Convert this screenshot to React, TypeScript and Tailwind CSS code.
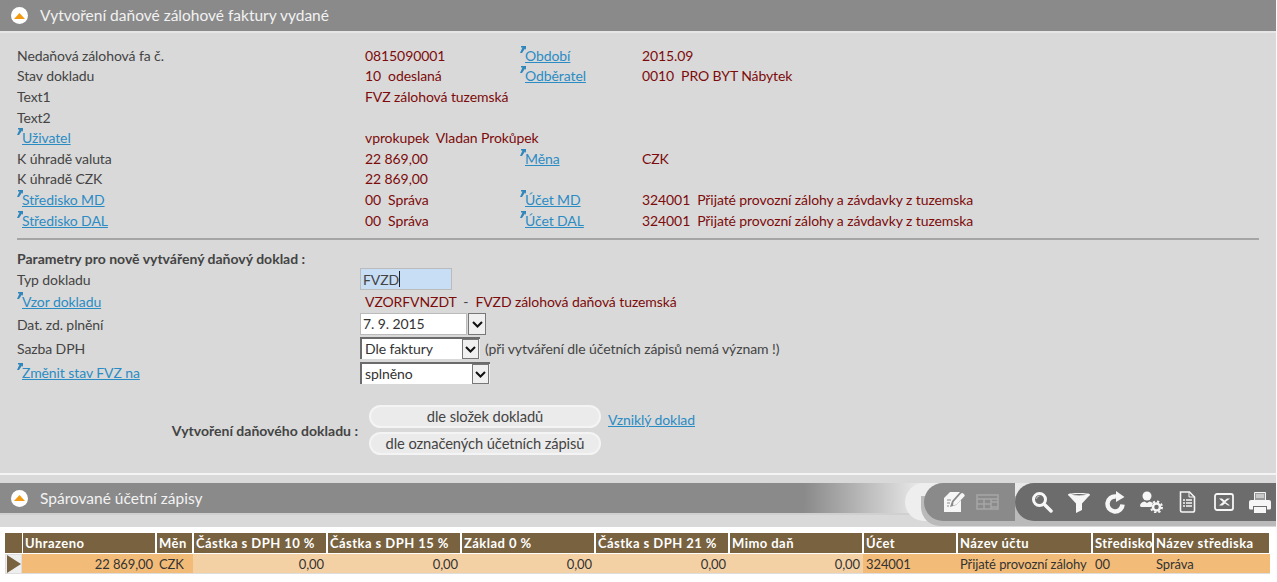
const font = "font-['Lato','Noto_Sans',sans-serif]";

function Toggle() {
  return (
    <span className="flex size-[17px] shrink-0 items-center justify-center rounded-full bg-white">
      <svg width="11" height="6" viewBox="0 0 11 6"><path d="M5.500 0 11 6H0z" fill="#f39a12" /></svg>
    </span>
  );
}

function SectionHeader({ title, bg, h }: { title: string; bg: string; h: string }) {
  return (
    <div className={`flex items-center gap-[12px] pl-[11px] text-[15.5px] tracking-normal text-[#f2f2f2] ${bg} ${h}`}>
      <Toggle />
      <span>{title}</span>
    </div>
  );
}

function Ref({ label }: { label: string }) {
  return (
    <span className="relative inline-block pl-[5px] leading-none">
      <svg className="absolute -top-[3px] left-0" width="6" height="7" viewBox="0 0 6 7">
        <path d="M1 0h5v4L5 2.500 2 7H0l2.500-5.500L1 1.500z" fill="#2f86bb" />
      </svg>
      <span className="text-[#2b8cc4] underline">{label}</span>
    </span>
  );
}

const rows: { a: React.ReactNode; b?: string; c?: string; d?: string }[] = [
  { a: "Nedaňová zálohová fa č.", b: "0815090001", c: "Období", d: "2015.09" },
  { a: "Stav dokladu", b: "10\u00a0\u00a0odeslaná", c: "Odběratel", d: "0010\u00a0\u00a0PRO BYT Nábytek" },
  { a: "Text1", b: "FVZ zálohová tuzemská" },
  { a: "Text2" },
  { a: <Ref label="Uživatel" />, b: "vprokupek\u00a0\u00a0Vladan Prokůpek" },
  { a: "K úhradě valuta", b: "22 869,00", c: "Měna", d: "CZK" },
  { a: "K úhradě CZK", b: "22 869,00" },
  { a: <Ref label="Středisko MD" />, b: "00\u00a0\u00a0Správa", c: "Účet MD", d: "324001\u00a0\u00a0Přijaté provozní zálohy a závdavky z tuzemska" },
  { a: <Ref label="Středisko DAL" />, b: "00\u00a0\u00a0Správa", c: "Účet DAL", d: "324001\u00a0\u00a0Přijaté provozní zálohy a závdavky z tuzemska" },
];

function Chevron() {
  return (
    <svg width="11" height="7" viewBox="0 0 11 7" fill="none">
      <path d="M1 1l4.500 4.500L10 1" stroke="#111" strokeWidth="2" />
    </svg>
  );
}

function SelectBox({ text, width, className }: { text: string; width: string; className?: string }) {
  return (
    <div className={`flex h-[22px] items-stretch border-l-2 border-t-2 border-[#6b6b6b] bg-white pl-[3px] ${width} ${className ?? ""}`}>
      <span className="flex-1 leading-[20px] text-[#333]">{text}</span>
      <span className="flex w-[17px] items-center justify-center border border-[#777] bg-[#f0f0f0]">
        <Chevron />
      </span>
      <span className="w-px bg-[#eee]" />
    </div>
  );
}

const columns = [
  { t: "Uhrazeno", w: "w-[134px]", v: "22 869,00", r: true, bg: "bg-[#f2bc78]" },
  { t: "Měn", w: "w-[37px]", v: "CZK", bg: "bg-[#f2bc78]" },
  { t: "Částka s DPH 10 %", w: "w-[134px]", v: "0,00", r: true, bg: "bg-[#f3d1a5]" },
  { t: "Částka s DPH 15 %", w: "w-[134px]", v: "0,00", r: true, bg: "bg-[#f3d1a5]" },
  { t: "Základ 0 %", w: "w-[134px]", v: "0,00", r: true, bg: "bg-[#f3d1a5]" },
  { t: "Částka s DPH 21 %", w: "w-[134px]", v: "0,00", r: true, bg: "bg-[#f3d1a5]" },
  { t: "Mimo daň", w: "w-[134px]", v: "0,00", r: true, bg: "bg-[#f3d1a5]" },
  { t: "Účet", w: "w-[94px]", v: "324001", bg: "bg-[#f2bc78]" },
  { t: "Název účtu", w: "w-[135px]", v: "Přijaté provozní zálohy", bg: "bg-[#f2bc78]" },
  { t: "Středisko", w: "w-[61px]", v: "00", bg: "bg-[#f2bc78]" },
  { t: "Název střediska", w: "w-[117px]", v: "Správa", bg: "bg-[#f2bc78]" },
];

function Toolbar() {
  const white = "#f6f6f6";
  const mid = "#8a8a8a";
  const dark = "#6c6c6c";
  return (
    <div className="absolute right-0 top-0 flex h-[38px] w-[352px]">
      {/* pale arc and shadow behind the pills */}
      <div className="absolute -left-[19px] top-0 h-[38px] w-[50px] rounded-l-[19px] bg-[#eeeeee]" />
      <div className="absolute -bottom-[5px] -left-[3px] right-0 h-[30px] rounded-bl-[19px] bg-[#bababa]" />

      <div className="relative flex w-[91px] shrink-0 items-center rounded-l-[19px] bg-[#8a8a8a] pl-[20px]">
        <svg className="shrink-0" width="21" height="20" viewBox="0 0 21 20">
          <path d="M6 0h10l-8 9-2 6 6-2 5-5v12H0V6z" fill={white} />
          <path d="M3 8h4M3 11h3M3 14h2" stroke={mid} strokeWidth="1" />
          <path d="M9.500 10 17 1.500a1.600 1.600 0 0 1 2.300 0l.9.9a1.600 1.600 0 0 1 0 2.200L12.500 12.500 9 13.500z" fill={white} />
        </svg>
        <svg className="ml-[11px] shrink-0" width="23" height="16" viewBox="0 0 23 16" fill="none" stroke="#a6a6a6" strokeWidth="1.500">
          <path d="M1 1h21v14H1zM1 5h21M1 10h14M8 5v10M15 5v10M15 8h7v5h-7" />
        </svg>
      </div>

      <div className="relative flex flex-1 items-center rounded-l-[19px] bg-[#6c6c6c] pl-[17px]">
        <svg width="21" height="22" viewBox="0 0 21 22" fill="none">
          <circle cx="7.500" cy="8.500" r="6" stroke={white} strokeWidth="3" />
          <path d="M4.500 8a3 3 0 0 1 3-3" stroke={white} strokeWidth="1" opacity="0.6" />
          <path d="M12.500 13.500 19 20" stroke={white} strokeWidth="3.500" strokeLinecap="round" />
        </svg>
        <svg className="ml-[15px]" width="22" height="21" viewBox="0 0 22 21">
          <path d="M0 2.500C0 .5 22 .5 22 2.500c0 1-1 1.500-2 2.500l-6 6.500V18l-6 3v-9.500L2 5C1 4 0 3.500 0 2.500z" fill={white} />
          <path d="M3.500 2.800c4-1 11-1 15 0-4 .8-11 .8-15 0z" fill={dark} />
        </svg>
        <svg className="ml-[15px]" width="21" height="23" viewBox="0 0 21 23" fill="none">
          <path d="M17.500 13.500a7.500 7.500 0 1 1-6.500-8" stroke={white} strokeWidth="4.500" />
          <path d="M11 0l8.500 6L11 11z" fill={white} />
        </svg>
        <svg className="ml-[14px]" width="23" height="22" viewBox="0 0 23 22">
          <circle cx="7" cy="5" r="4.500" fill={white} />
          <path d="M0 15c0-2.500 2-4 4.500-4.500L7 12l2.500-1.500c1.500.3 2.500 1 3.500 2L10.500 16H1z" fill={white} />
          <circle cx="16.500" cy="16" r="3.500" fill="none" stroke={white} strokeWidth="2.500" />
          <circle cx="16.500" cy="16" r="5.500" fill="none" stroke={white} strokeWidth="2" strokeDasharray="2.200 2.100" />
        </svg>
        <svg className="ml-[16px]" width="17" height="22" viewBox="0 0 17 22" fill="none" stroke={white}>
          <path d="M1.500 1h9l5 5v13.500a1.500 1.500 0 0 1-1.500 1.500H3a1.500 1.500 0 0 1-1.500-1.500z" strokeWidth="1.600" />
          <path d="M10 1v5h5" strokeWidth="1" />
          <path d="M4 9h2M7 9h6M4 12h2M7 12h6M4 15h2M7 15h6" strokeWidth="1.400" />
        </svg>
        <svg className="ml-[18px]" width="20" height="18" viewBox="0 0 20 18" fill="none">
          <rect x="1" y="1" width="18" height="16" rx="2" stroke={white} strokeWidth="1.800" />
          <path d="M5 5.500 9 9l-4 3.500h3.500L11 10.500l3 2h2L11.500 9 16 5.500h-3L10.500 7.500 8 5.500z" fill={white} />
        </svg>
        <svg className="ml-[15px]" width="22" height="21" viewBox="0 0 22 21">
          <path d="M5.500.500h11v8h-11z" fill="#9a9a9a" stroke={white} />
          <path d="M7 3h8M7 5h8" stroke={white} strokeWidth="1" />
          <path d="M2 8h18a2 2 0 0 1 2 2v6a1.500 1.500 0 0 1-1.500 1.500H18V14H4v3.500H1.500A1.500 1.500 0 0 1 0 16v-6a2 2 0 0 1 2-2z" fill={white} />
          <path d="M5 15h12v6H5z" fill={white} />
        </svg>
      </div>
    </div>
  );
}

export default function App() {
  return (
    <div className={`h-[582px] w-[1277px] overflow-hidden bg-white pr-px text-[14px] tracking-[-0.09px] text-[#444] ${font}`}>
      <div className="bg-[#d9d9d9]">
        <SectionHeader title="Vytvoření daňové zálohové faktury vydané" bg="bg-[#8a8a8a]" h="h-[31px]" />
        <div className="h-[2px] bg-[#e6e6e6]" />

        <div className="px-[17px] pt-[12px]">
          <div className="grid grid-cols-[348px_155px_122px_1fr] auto-rows-[20.6px] items-center">
            {rows.map((r, i) => (
              <div key={i} className="contents">
                <div>{r.a}</div>
                <div className="whitespace-nowrap text-[#7d0b0b]">{r.b}</div>
                <div>{r.c && <Ref label={r.c} />}</div>
                <div className="whitespace-nowrap text-[#7d0b0b]">{r.d}</div>
              </div>
            ))}
          </div>

          <div className="mb-[8px] mt-[8px] h-[2px] w-[1242px] bg-[#a5a5a5]" />
          <div className="font-bold tracking-normal">Parametry pro nově vytvářený daňový doklad :</div>

          <div className="-mt-px grid grid-cols-[343px_1fr] items-center">
            <div>Typ dokladu</div>
            <div className="flex h-[22px] w-[92px] items-center border border-[#bbb] bg-[#c8def5] pl-[2px] text-[#444]">
              FVZD<span className="h-[16px] w-px bg-[#222]" />
            </div>

            <div className="h-[23px] leading-[24px]"><Ref label="Vzor dokladu" /></div>
            <div className="h-[23px] pl-[5px] leading-[24px] text-[#7d0b0b]">VZORFVNZDT&nbsp;&nbsp;<span className="text-[#444]">-</span>&nbsp;&nbsp;FVZD zálohová daňová tuzemská</div>

            <div>Dat. zd. plnění</div>
            <div className="flex h-[22px] w-[126px] gap-px">
              <div className="flex-1 border border-[#bbb] bg-white pl-[2px] leading-[20px] text-[#333]">7. 9. 2015</div>
              <span className="flex w-[18px] items-center justify-center border border-[#777] bg-[#f0f0f0]"><Chevron /></span>
            </div>

            <div className="mt-[3px]">Sazba DPH</div>
            <div className="mt-[2px] flex items-center gap-[5px]">
              <SelectBox text="Dle faktury" width="w-[120px]" />
              <span>(při vytváření dle účetních zápisů nemá význam !)</span>
            </div>

            <div className="mt-[2px]"><Ref label="Změnit stav FVZ na" /></div>
            <SelectBox text="splněno" width="w-[130px]" className="mt-[3px]" />
          </div>

          <div className="mt-[21px] flex">
            <div className="flex w-[341px] items-center justify-end font-bold tracking-normal">Vytvoření daňového dokladu :</div>
            <div className="ml-[11px] flex flex-col gap-[4px]">
              <button className="h-[23px] w-[232px] rounded-full border-2 border-[#f4f4f4] bg-[#ebebeb] text-[14.7px] leading-none text-[#444]">dle složek dokladů</button>
              <button className="h-[23px] w-[232px] rounded-full border-2 border-[#f4f4f4] bg-[#ebebeb] text-[14.7px] leading-none text-[#444]">dle označených účetních zápisů</button>
            </div>
            <div className="ml-[7px] mt-[4px] text-[#2b8cc4] underline">Vzniklý doklad</div>
          </div>
        </div>

        <div className="mt-[18px] h-[2px] bg-[#f4f4f4]" />
        <div className="h-[8px]" />

        <div className="relative">
          <SectionHeader
            title="Spárované účetní zápisy"
            bg="bg-gradient-to-r from-[#8a8a8a] from-[63%] to-[#e8e8e8] to-[72%]"
            h="h-[30px]"
          />
          <Toolbar />
        </div>
        <div className="h-[2px] bg-[#d0d0d0]" />
        <div className="h-[12px]" />
      </div>

      <div className="h-[55px] bg-white pl-[5px] pt-[6px]">
        <div className="flex">
          <div className="flex w-[17px] flex-col">
            <div className="h-[20px] bg-[#78623f]" />
            <div className="mt-px flex h-[20px] items-center border border-[#ddd] bg-[#eee]">
              <svg width="15" height="18" viewBox="0 0 15 18"><path d="M1 0l14 9L1 18z" fill="#78623f" /></svg>
            </div>
          </div>
          {columns.map((c) => (
            <div key={c.t} className={`${c.w} flex shrink-0 flex-col`}>
              <div className="h-[20px] overflow-hidden whitespace-nowrap border-x border-white bg-[#78623f] pl-[2px] text-[13px] font-bold leading-[20px] tracking-[0.45px] text-white">{c.t}</div>
              <div className={`mt-px h-[20px] overflow-hidden whitespace-nowrap border-b border-[#ddd] ${c.bg} px-[3px] text-[13px] leading-[20px] text-[#333] ${c.r ? "text-right" : ""}`}>{c.v}</div>
            </div>
          ))}
        </div>
      </div>
    </div>
  );
}
